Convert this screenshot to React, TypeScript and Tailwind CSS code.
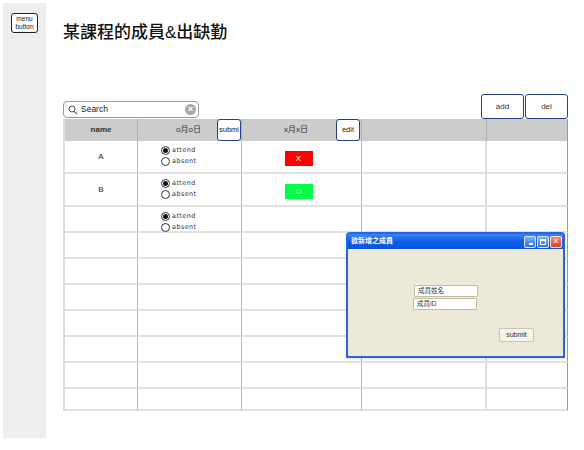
import React from 'react';

const font = { fontFamily: '"Liberation Sans", "Noto Sans CJK TC", sans-serif' };

const rowHeights = [33, 33, 26, 26, 26, 26, 26, 26, 26, 22];

function Radio({ checked, label }: { checked: boolean; label: string }) {
  return (
    <div className="flex items-center gap-[2px] h-[11px]">
      <span className="w-[9px] h-[9px] rounded-full border border-[#333] flex items-center justify-center bg-white">
        {checked && <span className="w-[5px] h-[5px] rounded-full bg-[#111]" />}
      </span>
      <span className="text-[6.5px] text-[#333] tracking-[0.4px]" style={{ fontFamily: '"DejaVu Sans", sans-serif' }}>
        {label}
      </span>
    </div>
  );
}

function RadioPair() {
  return (
    <div className="flex flex-col pl-[23px] pt-[4px]">
      <Radio checked label="attend" />
      <Radio checked={false} label="absent" />
    </div>
  );
}

function Mark({ text, color }: { text: string; color: string }) {
  return (
    <div className="flex justify-center pt-[10px] pr-[6px]">
      <div className={`w-[28px] h-[15px] ${color} flex items-center justify-center text-[8px] text-white`}>{text}</div>
    </div>
  );
}

function Dialog() {
  return (
    <div className="absolute left-[346px] top-[232px] w-[219px] h-[126px] border-2 border-[#2a63e6] rounded-t-[4px] bg-[#ece9d8] flex flex-col shadow-sm">
      <div className="h-[15px] bg-gradient-to-b from-[#3a86f7] via-[#0b5ce6] to-[#0a56d8] flex items-center justify-between pl-[3px] pr-[1px]">
        <span className="text-[7px] text-white font-bold">欲新增之成員</span>
        <div className="flex gap-[1px]">
          <div className="w-[12px] h-[12px] rounded-[2px] bg-gradient-to-b from-[#7ab0ff] to-[#2d6ee8] border border-white/80 flex items-end justify-center pb-[2px] pl-[1px]">
            <span className="w-[4px] h-[1.5px] bg-white" />
          </div>
          <div className="w-[12px] h-[12px] rounded-[2px] bg-gradient-to-b from-[#7ab0ff] to-[#2d6ee8] border border-white/80 flex items-center justify-center">
            <span className="w-[6px] h-[6px] border border-white border-t-2" />
          </div>
          <div className="w-[12px] h-[12px] rounded-[2px] bg-gradient-to-b from-[#f28a6b] to-[#d8411c] border border-white/80 flex items-center justify-center text-white text-[9px] leading-none">
            ×
          </div>
        </div>
      </div>
      <div className="relative flex-1">
        <div className="absolute left-[66px] top-[36px] w-[64px] h-[12px] bg-white border border-[#c3bba3] rounded-[1px] text-[6.5px] text-[#333] pl-[3px] leading-[10px]">
          成員姓名
        </div>
        <div className="absolute left-[65px] top-[49px] w-[64px] h-[12px] bg-white border border-[#c3bba3] rounded-[1px] text-[6.5px] text-[#333] pl-[3px] leading-[10px]">
          成員ID
        </div>
        <div className="absolute left-[151px] top-[79px] w-[35px] h-[14px] bg-[#f5f4ef] border border-[#c9c4b4] rounded-[2px] text-[7px] text-[#333] flex items-center justify-center">
          submit
        </div>
      </div>
    </div>
  );
}

export default function App() {
  return (
    <div className="relative w-[584px] h-[450px] bg-white overflow-hidden" style={font}>
      <div className="flex">
        <div className="ml-[3px] mt-[3px] w-[43px] h-[435px] bg-[#eeeeee] flex justify-center pt-[10px]">
          <div className="w-[27px] h-[20px] border border-[#222] rounded-[3px] bg-white flex flex-col items-center justify-center text-[6.5px] leading-[8px] text-[#222]">
            <span>menu</span>
            <span>button</span>
          </div>
        </div>

        <div className="ml-[17px] flex flex-col w-[505px]">
          <h1 className="mt-[23px] h-[20px] text-[17px] leading-[20px] font-medium text-[#111]">某課程的成員&amp;出缺勤</h1>

          <div className="mt-[51px] flex items-end justify-between h-[25px]">
            <div className="mb-[1px] w-[136px] h-[17px] border border-[#8e9bb0] rounded-[4px] flex items-center pl-[4px] pr-[2px] bg-white">
              <svg width="10" height="10" viewBox="0 0 10 10" className="shrink-0">
                <circle cx="4" cy="4" r="3" fill="none" stroke="#555" strokeWidth="1" />
                <line x1="6.3" y1="6.3" x2="9" y2="9" stroke="#555" strokeWidth="1.1" />
              </svg>
              <span className="ml-[3px] text-[8.5px] text-[#222] flex-1">Search</span>
              <span className="w-[11px] h-[11px] rounded-full bg-[#a9a9a9] flex items-center justify-center text-white text-[9px] leading-none font-bold">
                ×
              </span>
            </div>
            <div className="flex">
              <div className="w-[43px] h-[25px] border-[1.5px] border-[#23408a] rounded-[3px] flex items-center justify-center text-[8px] text-[#333]">add</div>
              <div className="ml-[1px] w-[43px] h-[25px] border-[1.5px] border-[#23408a] rounded-[3px] flex items-center justify-center text-[8px] text-[#333]">del</div>
            </div>
          </div>

          <div className="grid grid-cols-[73px_104px_120px_125px_81px] border-l-2 border-[#dddddd]">
            <div className="h-[22px] bg-[#cccccc] border-r border-[#b0b0b0] flex items-center justify-center text-[8px] font-bold text-[#333]">name</div>
            <div className="h-[22px] bg-[#cccccc] border-r border-[#b0b0b0] flex items-center text-[8px] text-[#333]">
              <span className="flex-1 text-center pl-[22px]">o月o日</span>
              <div className="w-[24px] h-[22px] bg-white border-[1.5px] border-[#23408a] rounded-[3px] flex items-center text-[7.5px] text-[#222] pl-[1px] whitespace-nowrap">submi</div>
            </div>
            <div className="h-[22px] bg-[#cccccc] border-r border-[#b0b0b0] flex items-center text-[8px] text-[#333]">
              <span className="flex-1 text-center pl-[14px]">x月x日</span>
              <div className="mr-[1px] w-[24px] h-[22px] bg-white border-[1.5px] border-[#23408a] rounded-[3px] flex items-center justify-center text-[7.5px] text-[#222]">edit</div>
            </div>
            <div className="h-[22px] bg-[#cccccc] border-r border-[#b0b0b0]" />
            <div className="h-[22px] bg-[#cccccc] border-r border-[#999]" />

            {rowHeights.map((h, i) => (
              <React.Fragment key={i}>
                <div className="border-r border-b-2 border-r-[#b8b8b8] border-b-[#e2e2e2] flex items-center justify-center text-[8px] text-[#222]" style={{ height: h }}>
                  {i === 0 ? 'A' : i === 1 ? 'B' : ''}
                </div>
                <div className="border-r border-b-2 border-r-[#b8b8b8] border-b-[#e2e2e2]" style={{ height: h }}>
                  {i < 3 && <RadioPair />}
                </div>
                <div className="border-r border-b-2 border-r-[#b8b8b8] border-b-[#e2e2e2]" style={{ height: h }}>
                  {i === 0 && <Mark text="X" color="bg-[#ff0000]" />}
                  {i === 1 && <Mark text="O" color="bg-[#00ff44]" />}
                </div>
                <div className="border-r-2 border-b-2 border-r-[#dedede] border-b-[#e2e2e2]" style={{ height: h }} />
                <div className="border-r border-b-2 border-r-[#999] border-b-[#e2e2e2]" style={{ height: h }} />
              </React.Fragment>
            ))}
          </div>
        </div>
      </div>
      <Dialog />
    </div>
  );
}
